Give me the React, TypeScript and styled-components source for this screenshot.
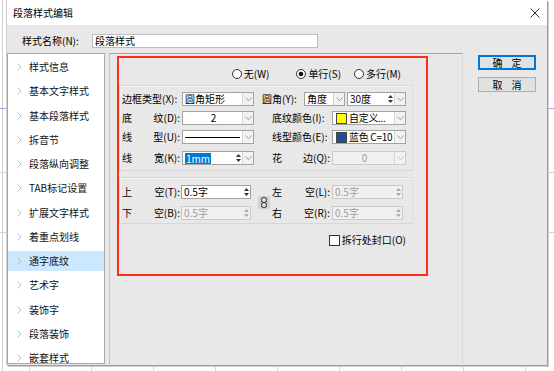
import React from "react";
import styled, { createGlobalStyle } from "styled-components";

const GlobalStyle = createGlobalStyle`
  html, body { margin: 0; padding: 0; background: #fff; }
  body {
    font-family: "Noto Sans CJK SC", "Liberation Sans", sans-serif;
    font-size: 10px;
    line-height: 12px;
    color: #000;
  }
`;

const navItems = [
  "样式信息",
  "基本文字样式",
  "基本段落样式",
  "拆音节",
  "段落纵向调整",
  "TAB标记设置",
  "扩展文字样式",
  "着重点划线",
  "通字底纹",
  "艺术字",
  "装饰字",
  "段落装饰",
  "嵌套样式",
];

const ChevronRight = () => (
  <svg width="5" height="8" viewBox="0 0 5 8">
    <path d="M0.5 0.5 L4 4 L0.5 7.5" fill="none" stroke="#bdbdbd" />
  </svg>
);

const DropArrow = ({ muted }: { muted?: boolean }) => (
  <svg width="7" height="5" viewBox="0 0 7 5">
    <path d="M0.5 0.5 L3.5 3.8 L6.5 0.5" fill="none" stroke={muted ? "#c4c4c4" : "#9a9a9a"} />
  </svg>
);

const SpinArrows = ({ muted }: { muted?: boolean }) => (
  <svg width="5" height="10" viewBox="0 0 5 10">
    <path d="M2.5 1 L5 4 H0 Z M0 6 H5 L2.5 9 Z" fill={muted ? "#a8a8a8" : "#333"} />
  </svg>
);

const CloseIcon = () => (
  <svg width="10" height="10" viewBox="0 0 10 10">
    <path d="M0.5 0.5 L9.5 9.5 M9.5 0.5 L0.5 9.5" stroke="#333" strokeWidth="1" />
  </svg>
);

const LinkIcon = () => (
  <svg width="12" height="13" viewBox="0 0 12 13">
    <rect x="0" y="0" width="12" height="13" rx="1.5" fill="#d2d2d2" />
    <rect x="3.5" y="1.5" width="5" height="5" rx="2" fill="none" stroke="#2a2a2a" />
    <rect x="3.5" y="6.5" width="5" height="5" rx="2" fill="none" stroke="#2a2a2a" />
  </svg>
);

const Radio = ({ checked, label }: { checked?: boolean; label: string }) => (
  <RadioItem>
    <svg width="10" height="10" viewBox="0 0 10 10">
      <circle cx="5" cy="5" r="4.5" fill="#fff" stroke="#333" />
      {checked && <circle cx="5" cy="5" r="2.3" fill="#111" />}
    </svg>
    <span>{label}</span>
  </RadioItem>
);

const Desktop = styled.div`
  position: relative;
  width: 554px;
  height: 371px;
  overflow: hidden;
  background:
    linear-gradient(#b99bd8, #b99bd8) 0 108px / 100% 1px no-repeat,
    linear-gradient(#d2d2d2, #d2d2d2) 0 172px / 100% 1px no-repeat,
    linear-gradient(#d2d2d2, #d2d2d2) 0 232px / 100% 1px no-repeat,
    linear-gradient(#cfcfcf, #cfcfcf) 2px 0 / 1px 100% no-repeat,
    repeating-linear-gradient(90deg, transparent 0 29px, #d8d8d8 29px 30px, transparent 30px 62px),
    #fff;
`;

const Dialog = styled.div`
  margin-left: 6px;
  width: 541px;
  height: 365px;
  box-sizing: border-box;
  border-left: 1px solid #cdcdcd;
  background: #e8e8e8;
  box-shadow: 1px 1px 0 #9c9c9c, 2px 2px 0 #cfcfcf;
  display: flex;
  flex-direction: column;
`;

const TitleBar = styled.div`
  height: 25px;
  flex: none;
  background: #fff;
  display: flex;
  align-items: center;
  justify-content: space-between;
  padding: 0 7px 0 6px;
`;

const NameRow = styled.div`
  display: flex;
  align-items: center;
  height: 14px;
  padding: 9px 0 0 15px;
`;

const NameLabel = styled.span`
  width: 70px;
`;

const NameInput = styled.div`
  width: 226px;
  height: 14px;
  box-sizing: border-box;
  border: 1px solid #bdbdbd;
  background: #fff;
  padding-left: 2px;
  display: flex;
  align-items: center;
`;

const Main = styled.div`
  flex: 1;
  display: flex;
  margin-top: 5px;
  padding-bottom: 1px;
  min-height: 0;
`;

const NavList = styled.ul`
  width: 98px;
  box-sizing: border-box;
  margin: 0;
  padding: 3px 0 0;
  list-style: none;
  border: 1px solid #a9a9a9;
  background: #fff;
  overflow: hidden;
`;

const NavItem = styled.li<{ $active?: boolean }>`
  display: flex;
  align-items: center;
  gap: 7px;
  height: 20px;
  margin-bottom: 4.25px;
  padding-left: 9px;
  color: #111;
  background: ${({ $active }) => ($active ? "#cce8ff" : "transparent")};
`;

const Panel = styled.div`
  width: 354px;
  margin-left: 4px;
  box-sizing: border-box;
  border-top: 1px solid #a5a5a5;
  border-left: 1px solid #c2c2c2;
  border-right: 1px solid #d9d9d9;
  padding: 2px 0 0 7px;
`;

const Marked = styled.div`
  width: 311px;
  height: 220px;
  box-sizing: border-box;
  border: 2px solid #ff2f17;
  display: flex;
  flex-direction: column;
`;

const RadioRow = styled.div`
  display: flex;
  justify-content: flex-end;
  align-items: center;
  height: 12px;
  margin-top: 10px;
  padding-right: 25px;
`;

const RadioItem = styled.span`
  display: flex;
  align-items: center;
  gap: 2px;
  margin-left: 13px;
  &:first-child { margin-right: 14px; }
`;

const Group = styled.div<{ $top: number }>`
  width: 294px;
  box-sizing: border-box;
  margin-top: ${({ $top }) => $top}px;
  border: 1px solid #d7d7d7;
  border-right-color: #dcdcdc;
  box-shadow: inset 1px 1px 0 #f3f3f3;
`;

const Rows = styled.div`
  display: flex;
  flex-direction: column;
  padding: 6px 0 5px 2px;
`;

const Row = styled.div<{ $gap?: number }>`
  display: flex;
  align-items: center;
  height: 14px;
  margin-top: ${({ $gap }) => $gap ?? 0}px;
`;

const Label = styled.span<{ $w?: number; $ml?: number; $mr?: number }>`
  display: flex;
  justify-content: space-between;
  white-space: nowrap;
  width: ${({ $w }) => $w ?? 58}px;
  margin-left: ${({ $ml }) => $ml ?? 0}px;
  margin-right: ${({ $mr }) => $mr ?? 2}px;
`;

const Field = styled.div<{ $w: number; $ml?: number; $disabled?: boolean }>`
  display: flex;
  align-items: stretch;
  box-sizing: border-box;
  width: ${({ $w }) => $w}px;
  height: 14px;
  margin-left: ${({ $ml }) => $ml ?? 0}px;
  border: 1px solid ${({ $disabled }) => ($disabled ? "#cacaca" : "#a3a3a3")};
  background: ${({ $disabled }) => ($disabled ? "#f0f0f0" : "#fff")};
  color: ${({ $disabled }) => ($disabled ? "#9e9e9e" : "#000")};
`;

const FieldText = styled.span<{ $center?: boolean; $tight?: boolean }>`
  flex: 1;
  min-width: 0;
  display: flex;
  align-items: center;
  gap: 2px;
  justify-content: ${({ $center }) => ($center ? "center" : "flex-start")};
  padding-left: 2px;
  white-space: nowrap;
  letter-spacing: ${({ $tight }) => ($tight ? "-0.3px" : "normal")};
`;

const DropBtn = styled.span`
  width: 10px;
  flex: none;
  display: flex;
  align-items: center;
  justify-content: center;
  border-left: 1px solid #d6d6d6;
  background: #f2f2f2;
`;

const Spin = styled.span`
  width: 8px;
  flex: none;
  display: flex;
  align-items: center;
  justify-content: center;
`;

const Swatch = styled.span<{ $color: string }>`
  flex: none;
  width: 9px;
  height: 9px;
  margin-left: 1px;
  border: 1px solid #444;
  background: ${({ $color }) => $color};
`;

const LineSample = styled.span`
  flex: 1;
  height: 1px;
  margin-right: 2px;
  background: #000;
`;

const Selected = styled.span`
  background: #0078d7;
  color: #fff;
  padding: 0 1px;
  line-height: 11px;
`;

const SpacingGrid = styled.div`
  display: grid;
  grid-template-columns: 59px 70px 21px 60px 71px;
  grid-template-rows: 14px 14px;
  row-gap: 7px;
  align-items: center;
  padding: 7px 0 3px 2px;
`;

const LinkCell = styled.span`
  grid-column: 3;
  grid-row: 1 / span 2;
  margin-left: 7px;
  display: flex;
  align-items: center;
`;

const CheckRow = styled.div`
  display: flex;
  justify-content: flex-end;
  align-items: center;
  gap: 2px;
  margin-top: 10px;
  padding-right: 20px;
`;

const CheckBox = styled.span`
  width: 11px;
  height: 11px;
  box-sizing: border-box;
  border: 1px solid #333;
  background: #fff;
`;

const Buttons = styled.div`
  display: flex;
  flex-direction: column;
  gap: 7px;
  margin: 2px 0 0 15px;
`;

const Button = styled.button<{ $primary?: boolean }>`
  width: 58px;
  height: 15px;
  padding: 0 0 0 9px;
  box-sizing: border-box;
  font: inherit;
  letter-spacing: 9px;
  color: #000;
  background: #e1e1e1;
  border: 1px solid ${({ $primary }) => ($primary ? "#0078d7" : "#adadad")};
  box-shadow: ${({ $primary }) => ($primary ? "inset 0 0 0 1px #0078d7" : "none")};
  display: flex;
  align-items: center;
  justify-content: center;
`;

const App: React.FC = () => {
  return (
    <Desktop>
      <GlobalStyle />
      <Dialog>
        <TitleBar>
          <span>段落样式编辑</span>
          <CloseIcon />
        </TitleBar>
        <NameRow>
          <NameLabel>样式名称(N):</NameLabel>
          <NameInput>段落样式</NameInput>
        </NameRow>
        <Main>
          <NavList>
            {navItems.map((item) => (
              <NavItem key={item} $active={item === "通字底纹"}>
                <ChevronRight />
                <span>{item}</span>
              </NavItem>
            ))}
          </NavList>
          <Panel>
            <Marked>
              <RadioRow>
                <Radio label="无(W)" />
                <Radio checked label="单行(S)" />
                <Radio label="多行(M)" />
              </RadioRow>
              <Group $top={5}>
                <Rows>
                  <Row>
                    <Label><span>边框类型(X):</span></Label>
                    <Field $w={72}>
                      <FieldText>圆角矩形</FieldText>
                      <DropBtn><DropArrow /></DropBtn>
                    </Field>
                    <Label $w={40} $ml={8}><span>圆角(Y):</span></Label>
                    <Field $w={41}>
                      <FieldText>角度</FieldText>
                      <DropBtn><DropArrow /></DropBtn>
                    </Field>
                    <Field $w={59} $ml={2}>
                      <FieldText>30度</FieldText>
                      <Spin><SpinArrows /></Spin>
                      <DropBtn><DropArrow /></DropBtn>
                    </Field>
                  </Row>
                  <Row $gap={5}>
                    <Label><span>底</span><span>纹(D):</span></Label>
                    <Field $w={72}>
                      <FieldText $center>2</FieldText>
                      <DropBtn><DropArrow /></DropBtn>
                    </Field>
                    <Label $ml={18}><span>底纹颜色(I):</span></Label>
                    <Field $w={74}>
                      <FieldText $tight>
                        <Swatch $color="#ffff00" />
                        自定义...
                      </FieldText>
                      <DropBtn><DropArrow /></DropBtn>
                    </Field>
                  </Row>
                  <Row $gap={5}>
                    <Label><span>线</span><span>型(U):</span></Label>
                    <Field $w={72}>
                      <FieldText><LineSample /></FieldText>
                      <DropBtn><DropArrow /></DropBtn>
                    </Field>
                    <Label $ml={18}><span>线型颜色(E):</span></Label>
                    <Field $w={74}>
                      <FieldText $tight>
                        <Swatch $color="#1d4f9c" />
                        蓝色 C=10
                      </FieldText>
                      <DropBtn><DropArrow /></DropBtn>
                    </Field>
                  </Row>
                  <Row $gap={7}>
                    <Label><span>线</span><span>宽(K):</span></Label>
                    <Field $w={72}>
                      <FieldText><Selected>1mm</Selected></FieldText>
                      <Spin><SpinArrows /></Spin>
                      <DropBtn><DropArrow /></DropBtn>
                    </Field>
                    <Label $ml={18}><span>花</span><span>边(Q):</span></Label>
                    <Field $w={74} $disabled>
                      <FieldText $center>0</FieldText>
                      <DropBtn><DropArrow muted /></DropBtn>
                    </Field>
                  </Row>
                </Rows>
              </Group>
              <Group $top={6}>
                <SpacingGrid>
                  <Label $mr={1}><span>上</span><span>空(T):</span></Label>
                  <Field $w={70}>
                    <FieldText>0.5字</FieldText>
                    <Spin><SpinArrows /></Spin>
                  </Field>
                  <LinkCell><LinkIcon /></LinkCell>
                  <Label><span>左</span><span>空(L):</span></Label>
                  <Field $w={71} $disabled>
                    <FieldText>0.5字</FieldText>
                    <Spin><SpinArrows muted /></Spin>
                  </Field>
                  <Label $mr={1}><span>下</span><span>空(B):</span></Label>
                  <Field $w={70} $disabled>
                    <FieldText>0.5字</FieldText>
                    <Spin><SpinArrows muted /></Spin>
                  </Field>
                  <Label><span>右</span><span>空(R):</span></Label>
                  <Field $w={71} $disabled>
                    <FieldText>0.5字</FieldText>
                    <Spin><SpinArrows muted /></Spin>
                  </Field>
                </SpacingGrid>
              </Group>
              <CheckRow>
                <CheckBox />
                <span>拆行处封口(O)</span>
              </CheckRow>
            </Marked>
          </Panel>
          <Buttons>
            <Button $primary>确定</Button>
            <Button>取消</Button>
          </Buttons>
        </Main>
      </Dialog>
    </Desktop>
  );
};

export default App;
